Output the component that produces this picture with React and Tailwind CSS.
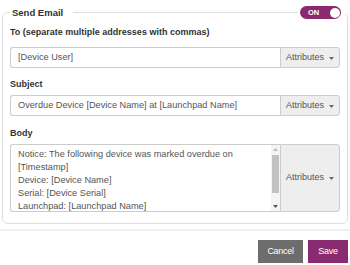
import React from "react";

function Caret() {
  return (
    <svg width="5" height="3" viewBox="0 0 5 3" className="ml-[5px] mt-[1px]">
      <path d="M0 0 L5 0 L2.5 3 Z" fill="#666" />
    </svg>
  );
}

function AttrButton() {
  return (
    <div className="w-[60px] shrink-0 flex items-center justify-center bg-[#eeeeee] border border-[#cccccc] rounded-r-[3px] text-[9px] text-[#555]">
      Attributes
      <Caret />
    </div>
  );
}

function Label({ children, mb = "mb-[4px]" }) {
  return <div className={`text-[9px] font-bold leading-[14px] text-[#333] ${mb}`}>{children}</div>;
}

function Field({ label, value, mb }) {
  return (
    <div>
      <Label mb={mb}>{label}</Label>
      <div className="flex h-[21px]">
        <div className="flex-1 flex items-center border border-r-0 border-[#cccccc] rounded-l-[3px] bg-white px-[7px] text-[9.2px] text-[#555]">
          {value}
        </div>
        <AttrButton />
      </div>
    </div>
  );
}

export default function App() {
  const lines = [
    "Notice: The following device was marked overdue on",
    "[Timestamp]",
    "Device: [Device Name]",
    "Serial: [Device Serial]",
    "Launchpad: [Launchpad Name]",
    "User: [Device User]",
  ];
  return (
    <div className="relative w-[350px] h-[265px] bg-white font-['Liberation_Sans',Arial,sans-serif] overflow-hidden">
      <fieldset className="ml-[2px] mt-[6px] w-[346px] border border-[#dddddd] rounded-[6px] px-[7px] pb-[11px]">
        <legend className="pl-[2px] pr-[10px] text-[9.5px] font-bold leading-[13px] text-[#333]">Send Email</legend>
        <div className="pt-[6px]">
          <Field label="To (separate multiple addresses with commas)" value="[Device User]" mb="mb-[8px]" />
        </div>
        <div className="mt-[9px]">
          <Field label="Subject" value="Overdue Device [Device Name] at [Launchpad Name]" />
        </div>
        <div className="mt-[10px]">
          <Label>Body</Label>
          <div className="flex h-[68px]">
            <div className="flex-1 flex border border-r-0 border-[#cccccc] rounded-l-[3px] bg-white overflow-hidden">
              <div className="flex-1 pl-[7px] pt-[3px] text-[9.2px] leading-[13px] text-[#555] overflow-hidden">
                {lines.map((l) => (
                  <div key={l} className="whitespace-nowrap">{l}</div>
                ))}
              </div>
              <div className="w-[9px] flex flex-col items-center bg-[#f4f4f4]">
                <svg width="5" height="3" viewBox="0 0 5 3" className="mt-[3px]">
                  <path d="M0 3 L5 3 L2.5 0 Z" fill="#bbb" />
                </svg>
                <div className="w-[7px] h-[38px] mt-[4px] bg-[#c1c1c1]" />
                <div className="flex-1" />
                <svg width="5" height="3" viewBox="0 0 5 3" className="mb-[3px]">
                  <path d="M0 0 L5 0 L2.5 3 Z" fill="#555" />
                </svg>
              </div>
            </div>
            <AttrButton />
          </div>
        </div>
      </fieldset>

      <div className="absolute left-[298px] top-[6px] bg-white px-[2px] pr-[4px]">
        <div className="w-[41px] h-[13px] rounded-full bg-[#8a2a6f] flex items-center justify-between pl-[8px] pr-[1.5px]">
          <span className="text-[7.5px] font-bold text-white leading-none">ON</span>
          <span className="w-[10px] h-[10px] rounded-full bg-white" />
        </div>
      </div>

      <div className="mt-[5px] h-[2px] bg-[#f1f1f1]" />

      <div className="flex justify-end gap-[5px] pr-[2px] mt-[9px]">
        <button className="w-[45px] h-[23px] bg-[#6d6d6d] text-white text-[9px] tracking-[-0.3px]">Cancel</button>
        <button className="w-[40px] h-[23px] bg-[#8b2b6f] text-white text-[9px] tracking-[-0.3px]">Save</button>
      </div>
    </div>
  );
}
